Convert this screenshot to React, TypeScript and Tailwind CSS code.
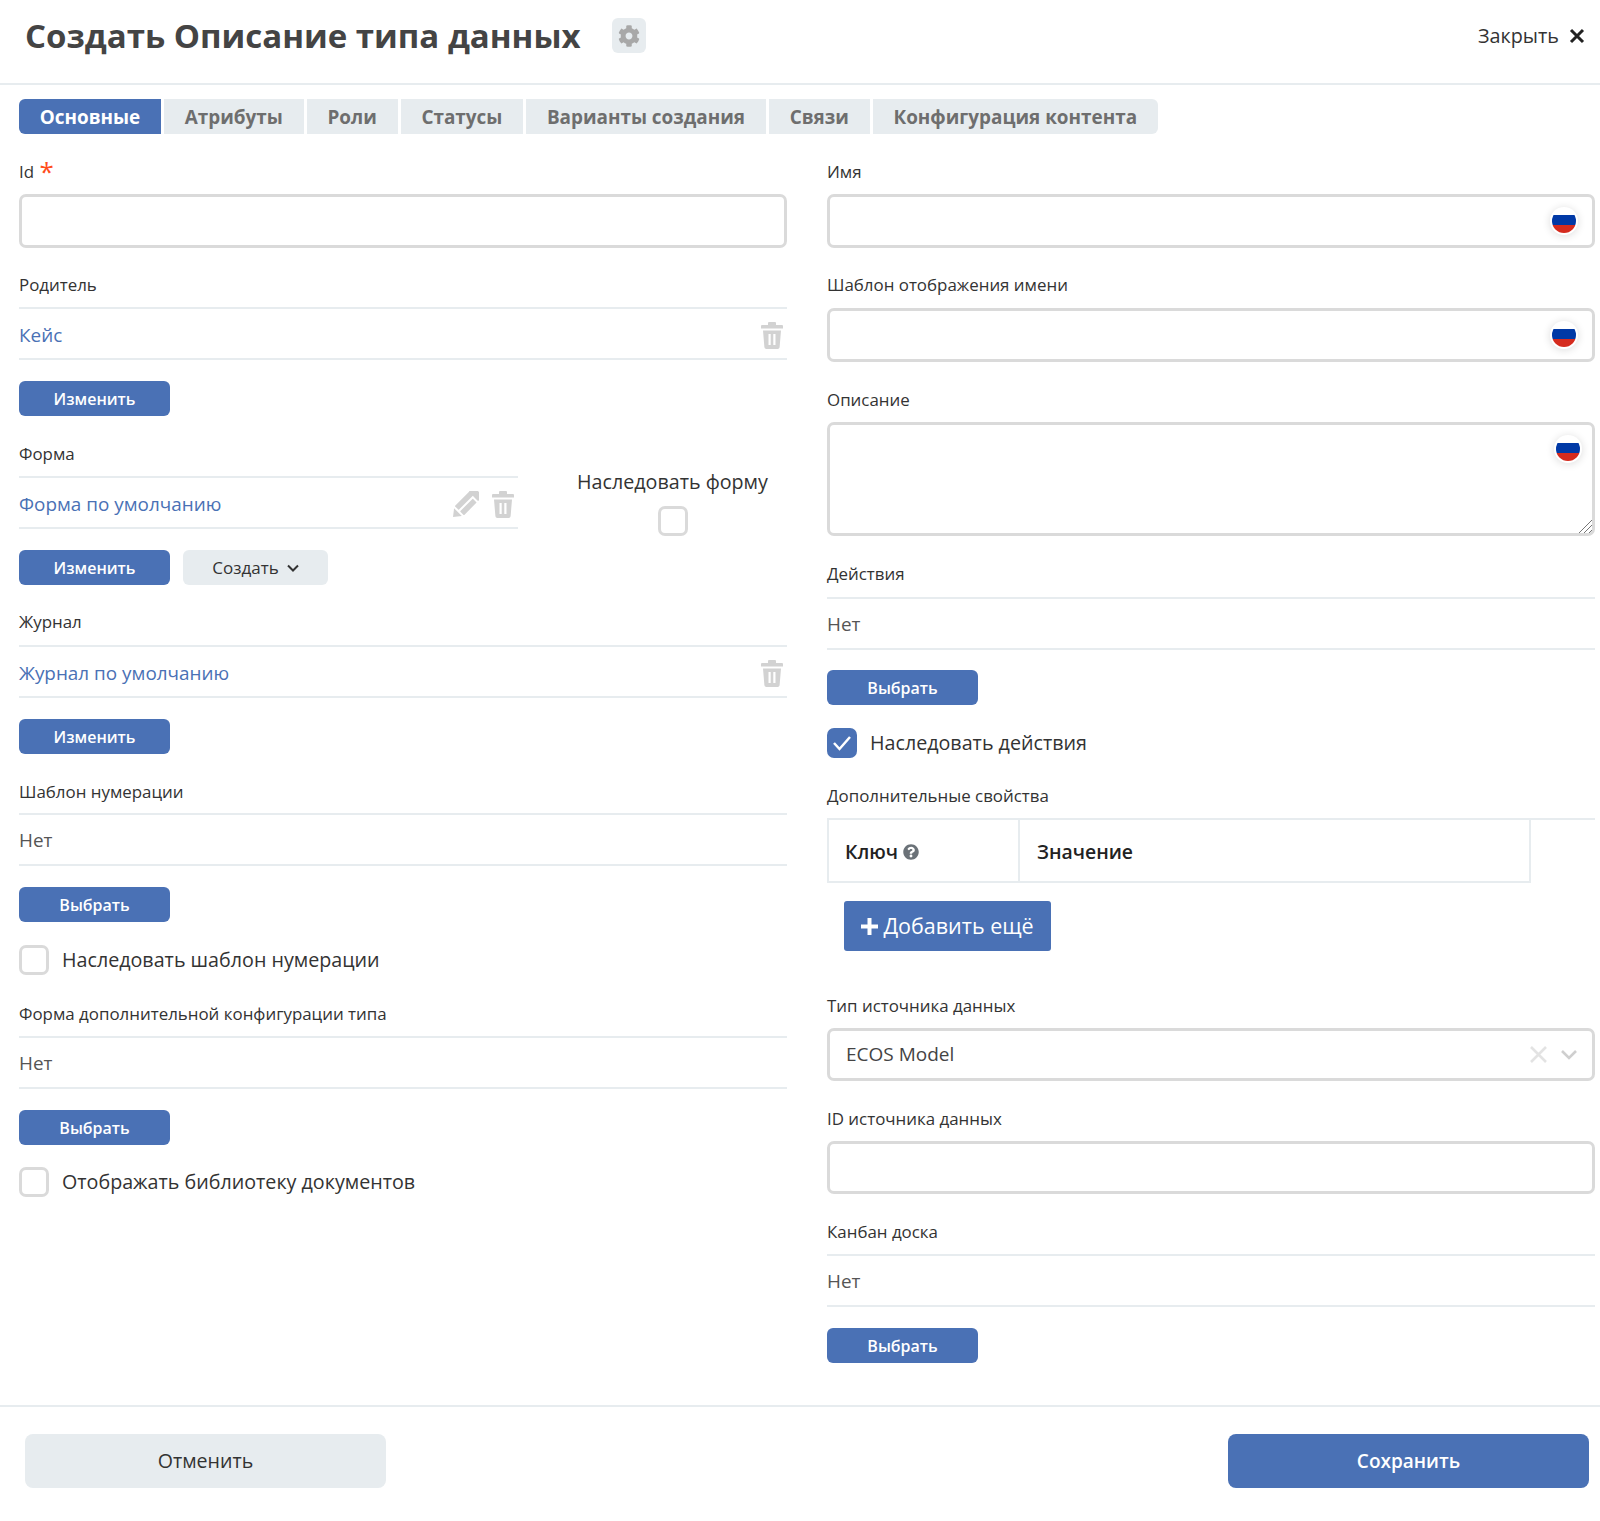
import { FaCog, FaQuestionCircle } from 'react-icons/fa'

const tabs = ['Атрибуты', 'Роли', 'Статусы', 'Варианты создания', 'Связи', 'Конфигурация контента']

function TrashIcon() {
  return (
    <svg width="22" height="27" viewBox="0 0 22 27" className="text-[#d2d2d2]" fill="currentColor">
      <path d="M8 0h6a1 1 0 0 1 1 1v2h6a1 1 0 0 1 1 1v2.500H0V4a1 1 0 0 1 1-1h6V1a1 1 0 0 1 1-1z" />
      <path fillRule="evenodd" d="M2 8.500h18l-1.400 16.700A2 2 0 0 1 16.600 27H5.400a2 2 0 0 1-2-1.800L2 8.500zm5.500 3.500v11h2.200V12H7.500zm4.800 0v11h2.200V12h-2.200z" />
    </svg>
  )
}

function PencilIcon() {
  return (
    <svg width="27" height="27" viewBox="0 0 27 27" className="text-[#d2d2d2]" fill="currentColor">
      <g transform="translate(1 26) rotate(-45)">
        <path d="M0 0l7-5.500v11L0 0z" />
        <rect x="9" y="-6.500" width="27" height="5.500" rx="0.500" />
        <rect x="9" y="1" width="18" height="5.500" rx="0.500" />
        <rect x="29" y="-6.500" width="7" height="13" rx="1" />
      </g>
    </svg>
  )
}

function Flag({ className }: { className: string }) {
  return (
    <span className={`absolute flex h-[28px] w-[28px] items-center justify-center rounded-full bg-white shadow-[0_1px_8px_rgba(0,0,0,0.14)] ${className}`}>
      <span className="flex h-[24px] w-[24px] flex-col overflow-hidden rounded-full">
        <span className="h-[6px] shrink-0 bg-white" />
        <span className="h-[10px] shrink-0 bg-[#0039a6]" />
        <span className="h-[8px] shrink-0 bg-[#d52b1e]" />
      </span>
    </span>
  )
}

function Label({ children, mt }: { children: React.ReactNode; mt: string }) {
  return <div className={`text-[16.9px] leading-[22px] text-[#333] ${mt}`}>{children}</div>
}

function Btn({ children }: { children: React.ReactNode }) {
  return (
    <button className="h-[35px] w-[151px] rounded-[6px] bg-[#4a71b5] text-[16px] font-semibold text-white">
      {children}
    </button>
  )
}

function ValueRow({ text, link, icons }: { text: string; link?: boolean; icons?: React.ReactNode }) {
  return (
    <div className={`flex h-[53px] items-center justify-between border-y-2 border-[#e7ecef] ${link ? 'pt-[3px]' : 'pt-[2px]'}`}>
      <span className={`text-[18.9px] ${link ? 'text-[#4a71b5]' : 'text-[#555]'}`}>{text}</span>
      {icons && <span className="flex items-center gap-[13px] pr-[4px]">{icons}</span>}
    </div>
  )
}

function Input({ flag, height = 'h-[54px]' }: { flag?: boolean; height?: string }) {
  return (
    <div className={`relative rounded-[7px] border-[3px] border-[#dadada] ${height}`}>
      {flag && <Flag className="right-[14px] top-[10px]" />}
    </div>
  )
}

function Check({ label, checked, mt }: { label: string; checked?: boolean; mt: string }) {
  return (
    <div className={`flex items-center gap-[13px] ${mt}`}>
      {checked ? (
        <span className="flex h-[30px] w-[30px] items-center justify-center rounded-[7px] bg-[#4a71b5]">
          <svg width="20" height="16" viewBox="0 0 20 16" fill="none" stroke="white" strokeWidth="2.500">
            <path d="M2 8l5.500 6L18 2" />
          </svg>
        </span>
      ) : (
        <span className="h-[30px] w-[30px] rounded-[7px] border-[3px] border-[#dadada]" />
      )}
      <span className="text-[19.7px] text-[#333]">{label}</span>
    </div>
  )
}

export default function App() {
  return (
    <div className="h-[1521px] w-[1600px] bg-white font-['Open_Sans',sans-serif]">
      {/* Header */}
      <div className="flex h-[85px] items-center justify-between border-b-2 border-[#e7ecef] pb-[12px] pl-[25px] pr-[15px]">
        <div className="flex items-center gap-[31px]">
          <h1 className="text-[33px] font-bold text-[#444]">Создать Описание типа данных</h1>
          <span className="flex h-[35px] w-[34px] items-center justify-center rounded-[6px] bg-[#e7ecef]">
            <FaCog className="text-[22px] text-[#a8a8a8]" />
          </span>
        </div>
        <div className="flex items-center gap-[10px] text-[19.8px] text-[#333]">
          Закрыть
          <svg width="16" height="16" viewBox="0 0 16 16" stroke="#222" strokeWidth="3" fill="none">
            <path d="M2 2l12 12M14 2L2 14" />
          </svg>
        </div>
      </div>

      {/* Tabs */}
      <div className="ml-[19px] mt-[14px] flex h-[35px] gap-[3px] text-[18.9px] font-bold">
        <div className="flex w-[142px] items-center justify-center rounded-l-[6px] bg-[#4a71b5] pt-[1px] text-white">Основные</div>
        {tabs.map((t, i) => (
          <div
            key={t}
            className={`flex items-center bg-[#e7ecef] px-[20.8px] pt-[1px] text-[#6e6e6e] ${i === tabs.length - 1 ? 'rounded-r-[6px]' : ''}`}
          >
            {t}
          </div>
        ))}
      </div>

      <div className="ml-[19px] grid w-[1576px] grid-cols-[768px_768px] gap-x-[40px]">
        {/* Left column */}
        <div>
          <Label mt="mt-[27px]">
            Id <span className="relative left-[1px] top-[3px] text-[26px] leading-[10px] text-[#ff4d1c]">*</span>
          </Label>
          <div className="mt-[11px]"><Input /></div>

          <Label mt="mt-[26px]">Родитель</Label>
          <div className="mt-[11px]"><ValueRow text="Кейс" link icons={<TrashIcon />} /></div>
          <div className="mt-[21px]"><Btn>Изменить</Btn></div>

          <div className="mt-[27px] flex h-[86px]">
            <div className="w-[499px]">
              <Label mt="">Форма</Label>
              <div className="mt-[11px]">
                <ValueRow text="Форма по умолчанию" link icons={<><PencilIcon /><TrashIcon /></>} />
              </div>
            </div>
            <div className="flex flex-1 flex-col items-center pl-[40px] pt-[24px]">
              <span className="text-[19.7px] text-[#333]">Наследовать форму</span>
              <span className="mt-[9px] h-[30px] w-[30px] shrink-0 rounded-[7px] border-[3px] border-[#dadada]" />
            </div>
          </div>
          <div className="mt-[21px] flex gap-[13px]">
            <Btn>Изменить</Btn>
            <button className="flex h-[35px] w-[145px] items-center justify-center gap-[8px] rounded-[6px] bg-[#e7ecef] text-[17px] text-[#333]">
              Создать
              <svg width="12" height="8" viewBox="0 0 12 8" fill="none" stroke="#333" strokeWidth="2">
                <path d="M1 1.500l5 5 5-5" />
              </svg>
            </button>
          </div>

          <Label mt="mt-[26px]">Журнал</Label>
          <div className="mt-[12px]"><ValueRow text="Журнал по умолчанию" link icons={<TrashIcon />} /></div>
          <div className="mt-[21px]"><Btn>Изменить</Btn></div>

          <Label mt="mt-[27px]">Шаблон нумерации</Label>
          <div className="mt-[10px]"><ValueRow text="Нет" /></div>
          <div className="mt-[21px]"><Btn>Выбрать</Btn></div>
          <Check label="Наследовать шаблон нумерации" mt="mt-[23px]" />

          <Label mt="mt-[28px]">Форма дополнительной конфигурации типа</Label>
          <div className="mt-[11px]"><ValueRow text="Нет" /></div>
          <div className="mt-[21px]"><Btn>Выбрать</Btn></div>
          <Check label="Отображать библиотеку документов" mt="mt-[22px]" />
        </div>

        {/* Right column */}
        <div>
          <Label mt="mt-[27px]">Имя</Label>
          <div className="mt-[11px]"><Input flag /></div>
          <Label mt="mt-[26px]">Шаблон отображения имени</Label>
          <div className="mt-[12px]"><Input flag /></div>
          <Label mt="mt-[27px]">Описание</Label>
          <div className="relative mt-[11px] h-[114px] rounded-[7px] border-[3px] border-[#dadada]">
            <Flag className="right-[10px] top-[10px]" />
            <svg width="14" height="14" viewBox="0 0 14 14" className="absolute bottom-0 right-0" stroke="#777" strokeWidth="1">
              <path d="M1 14L14 1M6 14l8-8M11 14l3-3" />
            </svg>
          </div>
          <Label mt="mt-[27px]">Действия</Label>
          <div className="mt-[12px]"><ValueRow text="Нет" /></div>
          <div className="mt-[20px]"><Btn>Выбрать</Btn></div>
          <Check label="Наследовать действия" checked mt="mt-[23px]" />
          <Label mt="mt-[27px]">Дополнительные свойства</Label>

          <div className="mt-[11px] border-t-2 border-[#e7ecef]">
            <div className="flex h-[63px] w-[704px] border-x-2 border-b-2 border-[#e7ecef] text-[19.4px] font-semibold text-[#222]">
              <div className="flex w-[191px] items-center gap-[5px] border-r-2 border-[#e7ecef] pl-[16px] pt-[3px]">
                Ключ <FaQuestionCircle className="text-[16px] text-[#6b7278]" />
              </div>
              <div className="flex items-center pl-[17px] pt-[3px]">Значение</div>
            </div>
          </div>
          <button className="ml-[17px] mt-[18px] flex h-[50px] w-[207px] items-center justify-center gap-[5px] rounded-[3px] bg-[#4a71b5] text-[21.5px] text-white">
            <svg width="17" height="17" viewBox="0 0 17 17" fill="white">
              <path d="M6.500 0h4v6.500H17v4h-6.500V17h-4v-6.500H0v-4h6.500z" />
            </svg>
            Добавить ещё
          </button>

          <Label mt="mt-[44px]">Тип источника данных</Label>
          <div className="mt-[11px] flex h-[53px] items-center justify-between rounded-[7px] border-[3px] border-[#dadada] pl-[16px] pr-[15px]">
            <span className="text-[19px] text-[#444]">ECOS Model</span>
            <span className="flex items-center gap-[14px]">
              <svg width="17" height="17" viewBox="0 0 17 17" stroke="#e3e3e3" strokeWidth="2.600" fill="none">
                <path d="M1 1l15 15M16 1L1 16" />
              </svg>
              <svg width="16" height="10" viewBox="0 0 16 10" stroke="#cfcfcf" strokeWidth="2.600" fill="none">
                <path d="M1 1l7 7 7-7" />
              </svg>
            </span>
          </div>
          <Label mt="mt-[27px]">ID источника данных</Label>
          <div className="mt-[11px]"><Input height="h-[53px]" /></div>
          <Label mt="mt-[27px]">Канбан доска</Label>
          <div className="mt-[11px]"><ValueRow text="Нет" /></div>
          <div className="mt-[21px]"><Btn>Выбрать</Btn></div>
        </div>
      </div>

      {/* Footer */}
      <div className="absolute left-0 top-[1405px] flex w-[1600px] justify-between border-t-2 border-[#e7ecef] pl-[25px] pr-[11px] pt-[27px]">
        <button className="h-[54px] w-[361px] rounded-[8px] bg-[#e7ecef] text-[19.6px] text-[#333]">Отменить</button>
        <button className="h-[54px] w-[361px] rounded-[8px] bg-[#4a71b5] text-[19px] font-semibold text-white">Сохранить</button>
      </div>
    </div>
  )
}
